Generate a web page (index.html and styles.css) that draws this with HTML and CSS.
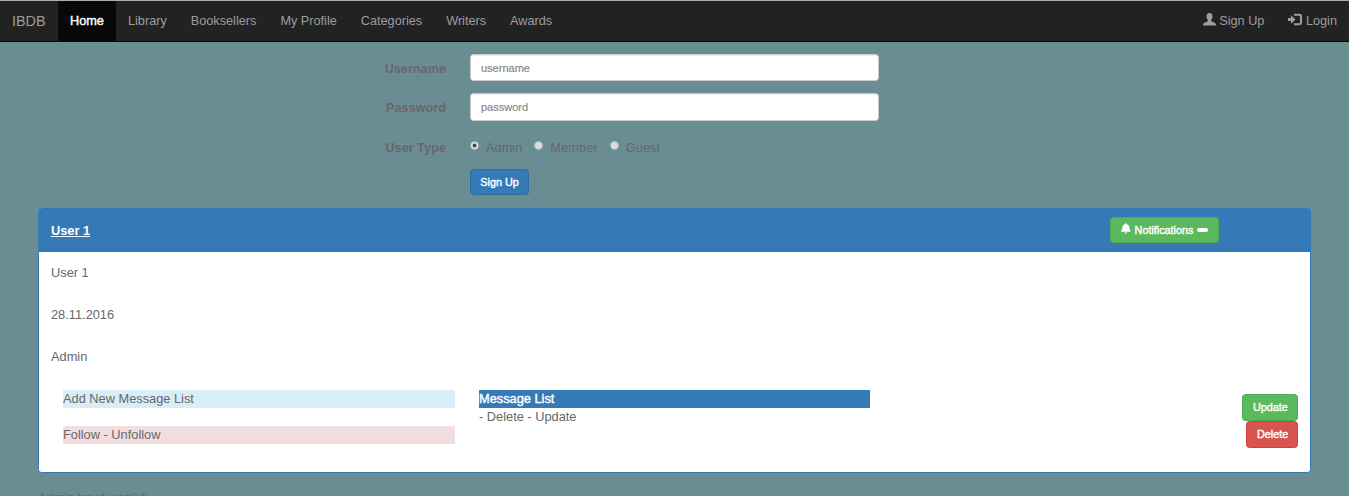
FILE: index.html
```html
<!DOCTYPE html>
<html lang="en">
<head>
<meta charset="utf-8">
<title>IBDB</title>
<link rel="stylesheet" href="styles.css">
</head>
<body>
<nav class="navbar">
  <a class="brand">IBDB</a>
  <a class="nav-item active">Home</a>
  <a class="nav-item">Library</a>
  <a class="nav-item">Booksellers</a>
  <a class="nav-item">My Profile</a>
  <a class="nav-item">Categories</a>
  <a class="nav-item">Writers</a>
  <a class="nav-item">Awards</a>
  <div class="nav-right">
    <a class="nav-item"><svg class="icon" viewBox="0 0 13 13"><path d="M6.500 0C4.600 0 3.400 1.300 3.500 3.200c0 1.400.5 2.900 1.300 3.800v1.300L1 10Q0 10.500 0 12.600h13q0-2.100-1-2.600L8.200 8.300V7c.8-.9 1.300-2.400 1.300-3.800C9.600 1.300 8.400 0 6.500 0z"/></svg> Sign Up</a>
    <a class="nav-item"><svg class="icon login-icon" viewBox="0 0 14 13"><path d="M0 5h3V2.300L7.500 6.500 3 10.700V8H0zM6 .8h5.500Q14 .8 14 3.200v6.600q0 2.400-2.500 2.400H6v-2h5q1 0 1-1V3.800q0-1-1-1H6z"/></svg> Login</a>
  </div>
</nav>

<form class="signup">
  <label class="label" for="username">Username</label>
  <input class="field" id="username" type="text" placeholder="username">
  <label class="label" for="password">Password</label>
  <input class="field field-password" id="password" type="password" placeholder="password">
  <span class="label">User Type</span>
  <div class="radios">
    <label class="choice"><input class="radio" type="radio" name="type" checked>Admin</label>
    <label class="choice"><input class="radio" type="radio" name="type">Member</label>
    <label class="choice"><input class="radio" type="radio" name="type">Guest</label>
  </div>
  <button class="btn btn-primary" type="button">Sign Up</button>
</form>

<section class="panel">
  <header class="panel-heading">
    <a class="panel-title">User 1</a>
    <button class="btn btn-success btn-notify" type="button"><svg class="bell" viewBox="0 0 10 11"><path d="M5 0c.7 0 1 .4 1 1 1.700.4 2.500 1.700 2.600 3.300.1 2 .4 2.800 1.400 4v.7H0v-.7c1-1.200 1.300-2 1.400-4C1.500 2.700 2.300 1.400 4 1c0-.6.3-1 1-1zM3.700 9.600h2.600Q6.200 11 5 11T3.700 9.600z"/></svg>Notifications<span class="badge"></span></button>
  </header>
  <div class="panel-body">
    <p class="detail">User 1</p>
    <p class="detail">28.11.2016</p>
    <p class="detail">Admin</p>
    <div class="columns">
      <div class="actions">
        <div class="strip info">Add New Message List</div>
        <div class="strip danger">Follow - Unfollow</div>
      </div>
      <div class="messages">
        <div class="strip primary">Message List</div>
        <div class="strip">- Delete - Update</div>
      </div>
      <div class="buttons">
        <button class="btn btn-success btn-tall" type="button">Update</button>
        <button class="btn btn-danger btn-tall btn-delete" type="button">Delete</button>
      </div>
    </div>
  </div>
</section>
<p class="status">Admin kaydi yapildi</p>
</body>
</html>
```
FILE: styles.css
```css
* { box-sizing: border-box; }
html { height: 100%; overflow: hidden; }
body {
  margin: 0;
  height: 100%;
  overflow: hidden;
  background: #6a8d94;
  color: #676767;
  font: 12.8px/18px "Liberation Sans", Arial, sans-serif;
}
.navbar {
  display: flex;
  height: 42px;
  background: #222;
  border-top: 1px solid #a9b0b0;
  border-bottom: 1px solid #080808;
}
.brand { padding: 11px 12px 0; width: 58px; font-size: 14.4px; color: #9d9d9d; }
.nav-item { padding: 11px 12px 0; color: #9d9d9d; font-size: 12.7px; white-space: nowrap; }
.active { width: 58px; background: #080808; color: #fff; -webkit-text-stroke: .4px #fff; }
.nav-right { display: flex; margin-left: auto; }
.icon { width: 13px; height: 13px; fill: currentColor; vertical-align: -1px; }
.login-icon { width: 14px; }

.signup {
  display: grid;
  grid-template-columns: 446px 409px;
  column-gap: 24px;
  padding-top: 12px;
}
.label { padding-top: 6px; text-align: right; font-size: 12.7px; font-weight: bold; }
.field {
  height: 27px;
  margin: 0 0 12px;
  padding: 0 10px;
  border: 1px solid #ccc;
  border-radius: 3.5px;
  background: #fff;
  box-shadow: inset 0 1px 1px rgba(0, 0, 0, .075);
  font: 11px "Liberation Sans", Arial, sans-serif;
}
.field-password { height: 28px; }
.field::placeholder { color: #888; opacity: 1; -webkit-text-stroke: .2px #888; }
.radios { display: flex; gap: 12px; height: 36px; padding-top: 6px; }
.choice { display: flex; gap: 7px; }
.choice:nth-child(2) { letter-spacing: .1px; }
.radio {
  appearance: none;
  width: 9px;
  height: 9px;
  margin: 2px 0 0;
  border: 1px solid #b5b5b5;
  border-radius: 50%;
  background: #ddd;
}
.radio:checked { background: radial-gradient(circle, #444 0 1.7px, #e5e5e5 2.3px); }
.btn {
  height: 26px;
  padding: 0 10px 1px;
  border: 1px solid;
  border-radius: 3.5px;
  color: #fff;
  font: 10.8px/22px "Liberation Sans", Arial, sans-serif;
  white-space: nowrap;
  -webkit-text-stroke: .4px #fff;
}
.btn-primary { grid-column: 2; justify-self: start; width: 59px; padding: 0 0 1px; background: #337ab7; border-color: #2e6da4; }
.btn-success { background: #5cb85c; border-color: #4cae4c; }
.btn-danger { background: #d9534f; border-color: #d43f3a; }

.panel {
  height: 265px;
  margin: 13px 38px 0;
  border: 1px solid #337ab7;
  border-radius: 3.5px;
  background: #fff;
}
.panel-heading {
  display: flex;
  justify-content: space-between;
  height: 43px;
  padding: 8px 91px 0 12px;
  background: #337ab7;
}
.panel-title { padding-top: 5px; color: #fff; font-weight: bold; text-decoration: underline; }
.btn-notify { display: flex; align-items: center; width: 109px; }
.bell { width: 10px; height: 11px; margin-right: 4px; fill: #fff; position: relative; top: -1px; }
.badge { width: 11px; height: 4px; margin-left: 4px; border-radius: 2px; background: #fff; }
.panel-body { padding: 12px; }
.detail { margin: 0 0 24px; }
.columns { display: flex; gap: 24px; padding-left: 12px; }
.actions { display: grid; gap: 18px; width: 392px; align-content: start; }
.messages { width: 391px; }
.strip { height: 18px; }
.info { background: #d9edf7; }
.danger { background: #f2dede; }
.primary { background: #337ab7; color: #fff; -webkit-text-stroke: .4px #fff; }
.buttons { display: flex; flex-direction: column; align-items: flex-end; margin-left: auto; padding-top: 4px; }
.btn-tall { width: 56px; height: 27px; padding-bottom: 2px; }
.btn-delete { width: 52px; }
.status { margin: 16px 38px 0; }
```
